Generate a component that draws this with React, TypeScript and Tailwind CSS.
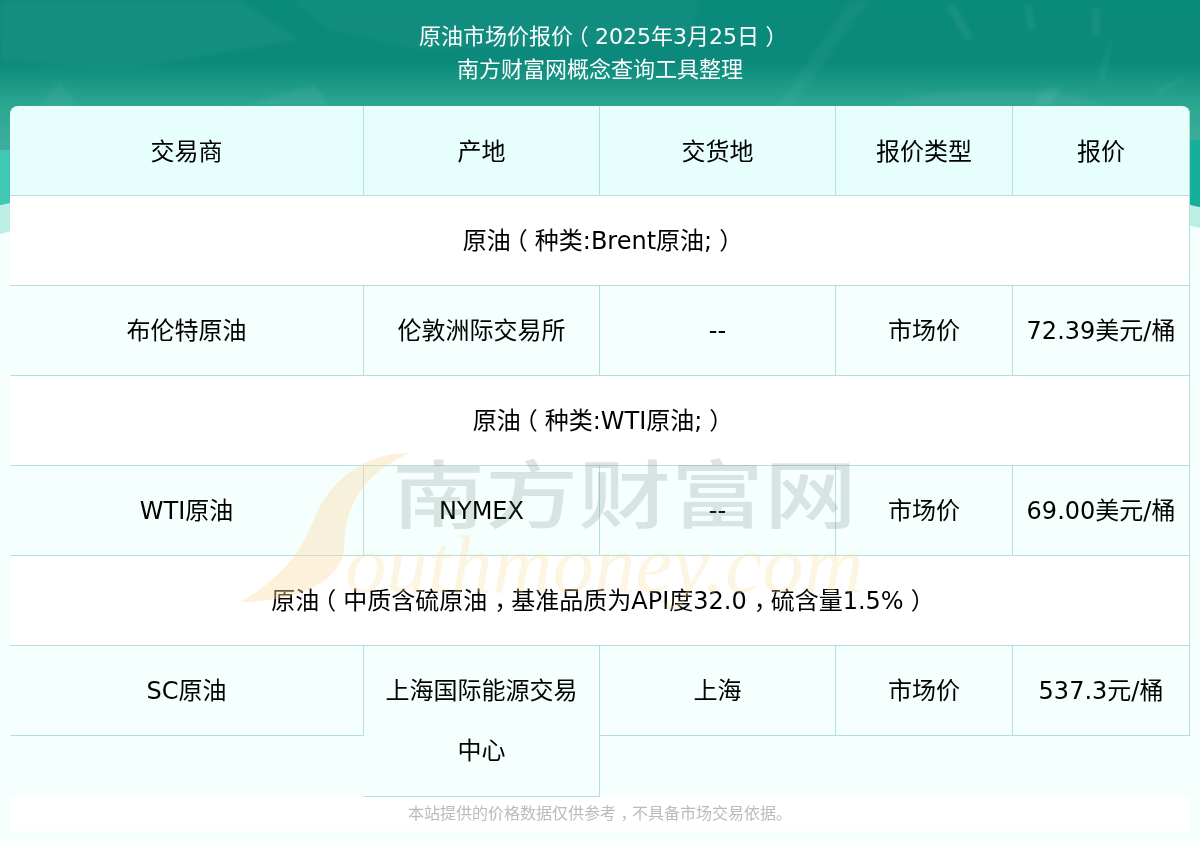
const headers = ['交易商', '产地', '交货地', '报价类型', '报价'];

const sections = [
  { title: '原油（种类:Brent原油;）', cells: ['布伦特原油', '伦敦洲际交易所', '--', '市场价', '72.39美元/桶'] },
  { title: '原油（种类:WTI原油;）', cells: ['WTI原油', 'NYMEX', '--', '市场价', '69.00美元/桶'] },
  {
    title: '原油（中质含硫原油，基准品质为API度32.0，硫含量1.5%）',
    cells: ['SC原油', '上海国际能源交易中心', '上海', '市场价', '537.3元/桶'],
  },
];

const gridCols = 'grid grid-cols-[354px_236px_236px_177px_177px] items-start';

// the reference's font centres full-width punctuation, ours pushes it to one side
function Punctuated({ text }: { text: string }) {
  return (
    <>
      {text.split(/([（），])/).map((part, i) => {
        if (part === '（') return <span key={i} className="relative -left-[0.29em]">{part}</span>;
        if (part === '）' || part === '，') return <span key={i} className="relative left-[0.29em]">{part}</span>;
        return part;
      })}
    </>
  );
}

function HeaderBackground() {
  return (
    <svg className="absolute left-0 top-0" width="1200" height="240" viewBox="0 0 1200 240">
      <defs>
        <linearGradient id="teal" x1="0" y1="0" x2="0" y2="1">
          <stop offset="0" stopColor="#0a8a7b" />
          <stop offset="0.3" stopColor="#0b8a7b" />
          <stop offset="0.5" stopColor="#2aa590" />
          <stop offset="0.7" stopColor="#3cae9c" />
          <stop offset="1" stopColor="#3cae9c" />
        </linearGradient>
        <linearGradient id="band" x1="0" y1="0" x2="1" y2="0">
          <stop offset="0" stopColor="#3fc9b5" />
          <stop offset="1" stopColor="#14b09b" />
        </linearGradient>
      </defs>
      <path d="M0 234V0H1200V228C1040 190 800 170 600 170S160 190 0 234Z" fill="#bdeee5" />
      <path d="M0 205V0H1200V207C1040 170 800 150 600 150S160 170 0 205Z" fill="url(#teal)" />
      <path d="M0 150L1200 140V207C1040 170 800 150 600 150S160 170 0 205Z" fill="url(#band)" />
      <g className="blur-[2px]">
        <path d="M0 0H240L300 40L120 70L0 60Z" fill="#ffffff" opacity="0.04" />
        <path d="M290 0H700L690 40L420 50L330 30Z" fill="#ffffff" opacity="0.03" />
        <path d="M60 80L95 130H20Z" fill="#ffffff" opacity="0.05" />
        <path d="M225 110L315 85L330 106H225Z" fill="#ffffff" opacity="0.06" />
        <path d="M850 0L870 0L790 110L775 110Z" fill="#ffffff" opacity="0.04" />
        <path d="M945 5L955 5L975 40L965 40Z M1025 5L1032 5L1035 30L1028 30Z M1092 8L1100 8L1100 35L1092 35Z M1105 55L1112 35L1105 80L1098 80Z M1040 90L1064 85L1050 106H1035Z" fill="#ffffff" opacity="0.06" />
        <path d="M1145 60L1160 32L1130 90Z M1155 90L1190 75L1160 95Z" fill="#ffffff" opacity="0.06" />
        <path d="M880 106C920 85 1080 85 1110 106Z" fill="#ffffff" opacity="0.05" />
      </g>
    </svg>
  );
}

function Watermark() {
  return (
    <div aria-hidden className="pointer-events-none absolute left-0 top-0 z-10">
      <svg className="absolute left-[240px] top-[450px]" width="170" height="160" viewBox="0 0 170 160">
        <path
          d="M170 3C130 2 95 25 77 62C65 90 55 120 0 152C50 152 100 135 104 100C105 70 110 30 170 3Z"
          fill="#fbdca8"
          opacity="0.4"
        />
      </svg>
      <span className="absolute left-[392px] top-[430px] scale-y-80 whitespace-nowrap font-['Noto_Sans_CJK_SC'] text-[93px] font-medium leading-[120px] text-[#5f7a70]/20">
        南方财富网
      </span>
      <span className="absolute left-[345px] top-[504px] whitespace-nowrap font-['Liberation_Serif'] text-[83px] italic leading-[120px] text-[#fbd9a0]/30">
        outhmoney.com
      </span>
    </div>
  );
}

export default function App() {
  return (
    <div className="relative h-[841px] w-[1200px] overflow-hidden bg-[#f5fffe] font-['DejaVu_Sans','Noto_Sans_CJK_SC',sans-serif] text-2xl text-black">
      <HeaderBackground />
      <Watermark />

      <div className="relative px-[10px]">
        {/* Title */}
        <div className="h-[106px] pt-[20px] text-center text-[22px] leading-[33px] text-white">
          <p><Punctuated text="原油市场价报价（2025年3月25日）" /></p>
          <p>南方财富网概念查询工具整理</p>
        </div>

        {/* Table */}
        <div className={`${gridCols} rounded-t-lg bg-[#e6fffc]`}>
          {headers.map((h) => (
            <div key={h} className="h-[90px] border-b border-r border-[#b5e0da] text-center leading-[92px] last:rounded-tr-lg">
              {h}
            </div>
          ))}
        </div>

        {sections.map((section) => (
          <div key={section.title}>
            <div className="h-[90px] border-b border-r border-[#b5e0da] bg-white text-center leading-[90px]">
              <Punctuated text={section.title} />
            </div>
            <div className={gridCols}>
              {section.cells.map((cell) => (
                <div
                  key={cell}
                  className={`${cell.length > 8 && !cell.includes('.') ? 'h-[151px]' : 'h-[90px]'} border-b border-r border-[#b5e0da] px-[12px] pt-[15px] text-center leading-[60px]`}
                >
                  {cell}
                </div>
              ))}
            </div>
          </div>
        ))}

        {/* Disclaimer */}
        <div className="h-[34px] bg-white text-center text-base leading-[34px] text-[#bbbbbb]">
          <Punctuated text="本站提供的价格数据仅供参考，不具备市场交易依据。" />
        </div>
      </div>
    </div>
  );
}
